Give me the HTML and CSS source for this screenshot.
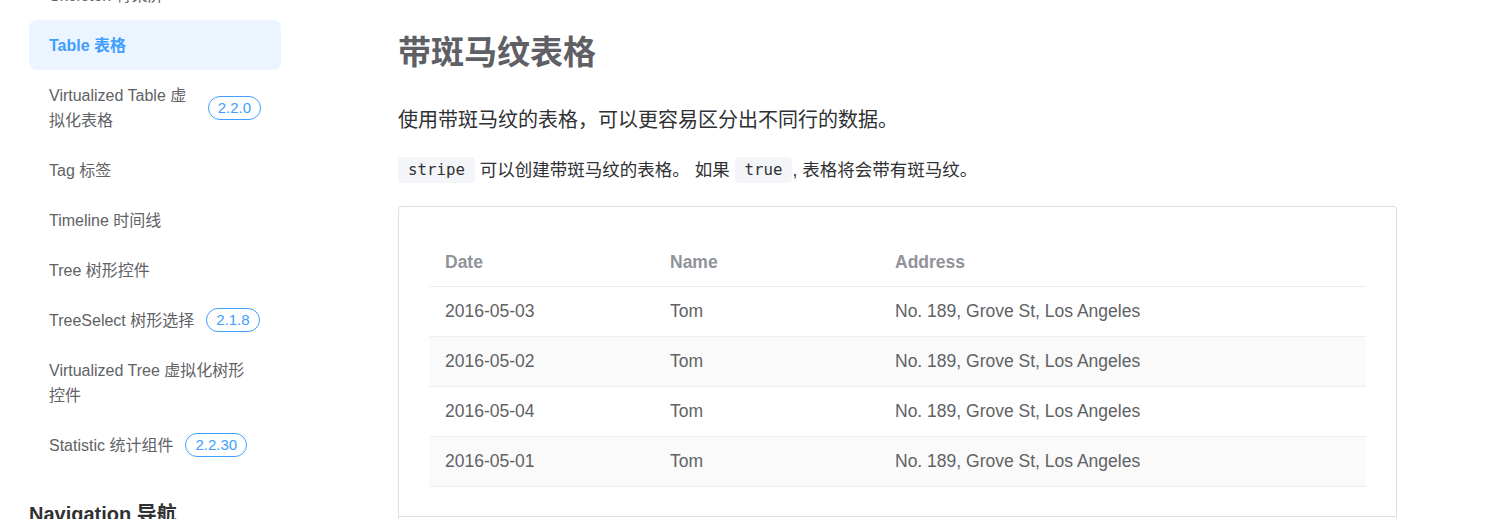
FILE: index.html
```html
<!DOCTYPE html>
<html lang="zh-CN">
<head>
<meta charset="utf-8">
<title>Table 表格</title>
<link rel="stylesheet" href="styles.css">
</head>
<body>
<div class="page">
  <aside class="sidebar">
    <ul class="nav-list">
      <li class="nav-item"><span class="nav-text">Skeleton 骨架屏</span></li>
      <li class="nav-item active"><span class="nav-text">Table 表格</span></li>
      <li class="nav-item"><span class="nav-text">Virtualized Table 虚拟化表格</span><span class="badge">2.2.0</span></li>
      <li class="nav-item"><span class="nav-text">Tag 标签</span></li>
      <li class="nav-item"><span class="nav-text">Timeline 时间线</span></li>
      <li class="nav-item"><span class="nav-text">Tree 树形控件</span></li>
      <li class="nav-item"><span class="nav-text">TreeSelect 树形选择</span><span class="badge">2.1.8</span></li>
      <li class="nav-item"><span class="nav-text">Virtualized Tree 虚拟化树形控件</span></li>
      <li class="nav-item"><span class="nav-text">Statistic 统计组件</span><span class="badge">2.2.30</span></li>
    </ul>
    <h3 class="nav-group">Navigation 导航</h3>
  </aside>
  <main class="content">
    <h2 class="title">带斑马纹表格</h2>
    <p class="para lead">使用带斑马纹的表格，可以更容易区分出不同行的数据。</p>
    <p class="para note"><code class="code">stripe</code> 可以创建带斑马纹的表格。 如果 <code class="code">true</code>, 表格将会带有斑马纹。</p>
    <div class="demo">
      <table class="table">
        <colgroup><col class="col-date"><col class="col-name"><col></colgroup>
        <thead>
          <tr><th>Date</th><th>Name</th><th>Address</th></tr>
        </thead>
        <tbody>
          <tr><td>2016-05-03</td><td>Tom</td><td>No. 189, Grove St, Los Angeles</td></tr>
          <tr class="striped"><td>2016-05-02</td><td>Tom</td><td>No. 189, Grove St, Los Angeles</td></tr>
          <tr><td>2016-05-04</td><td>Tom</td><td>No. 189, Grove St, Los Angeles</td></tr>
          <tr class="striped"><td>2016-05-01</td><td>Tom</td><td>No. 189, Grove St, Los Angeles</td></tr>
        </tbody>
      </table>
    </div>
    <div class="demo-footer"></div>
  </main>
</div>
</body>
</html>
```
FILE: styles.css
```css
html, body {
  margin: 0;
  padding: 0;
  background: #ffffff;
  overflow: hidden;
}
body {
  font-family: "Liberation Sans", Arial, "Noto Sans CJK SC", sans-serif;
  color: #606266;
}
.page {
  display: flex;
  align-items: flex-start;
}
.sidebar {
  width: 281px;
  flex-shrink: 0;
  box-sizing: border-box;
  padding-left: 29px;
}
.nav-list {
  list-style: none;
  margin: -30px 0 0;
  padding: 0;
}
.nav-item {
  display: flex;
  align-items: center;
  padding: 12.5px 20px;
  font-size: 16px;
  line-height: 25px;
  color: #606266;
  border-radius: 8px;
}
.nav-item.active {
  background: #ecf5ff;
  color: #409eff;
  font-weight: bold;
}
.nav-text {
  flex: 0 1 auto;
  min-width: 0;
  max-width: 204px;
}
.badge {
  flex-shrink: 0;
  margin-left: 12px;
  height: 24px;
  box-sizing: border-box;
  padding: 0 9px;
  border: 1px solid #409eff;
  border-radius: 12px;
  font-size: 15px;
  line-height: 22px;
  color: #409eff;
}
.nav-group {
  margin: 30px 0 0;
  font-size: 20px;
  line-height: 28px;
  font-weight: bold;
  color: #303133;
}
.content {
  margin-left: 117px;
  width: 999px;
}
.title {
  margin: 28px 0 0;
  font-family: "Noto Sans CJK SC", sans-serif;
  font-size: 33px;
  line-height: 44px;
  font-weight: 700;
  color: #5e6066;
}
.para {
  margin: 0;
  font-family: "Liberation Sans", "Noto Sans CJK SC", sans-serif;
  line-height: 30px;
  color: #303133;
}
.lead {
  margin-top: 33px;
  font-size: 20px;
}
.note {
  margin-top: 20px;
  font-size: 17.5px;
}
.code {
  display: inline-block;
  font-family: "DejaVu Sans Mono", "Liberation Mono", monospace;
  font-size: 15.75px;
  line-height: 22px;
  padding: 2px 10px;
  background: #f4f5f8;
  border-radius: 4px;
  color: #303133;
  vertical-align: 1px;
}
.demo {
  margin-top: 21px;
  border: 1px solid #dcdfe6;
  border-bottom: none;
  border-radius: 4px 4px 0 0;
  padding: 30px 30px 29px;
}
.demo-footer {
  border: 1px solid #dcdfe6;
  border-bottom: none;
  height: 20px;
}
.table {
  width: 100%;
  border-collapse: collapse;
  font-size: 17.5px;
}
.col-date, .col-name {
  width: 225px;
}
.table th,
.table td {
  text-align: left;
  padding: 0 16px;
  height: 49px;
  border-bottom: 1px solid #ebeef5;
}
.table th {
  color: #909399;
  font-weight: bold;
  height: 47px;
  padding-top: 2px;
}
.table td {
  color: #606266;
}
.table tr.striped td {
  background: #fafafa;
}
```
